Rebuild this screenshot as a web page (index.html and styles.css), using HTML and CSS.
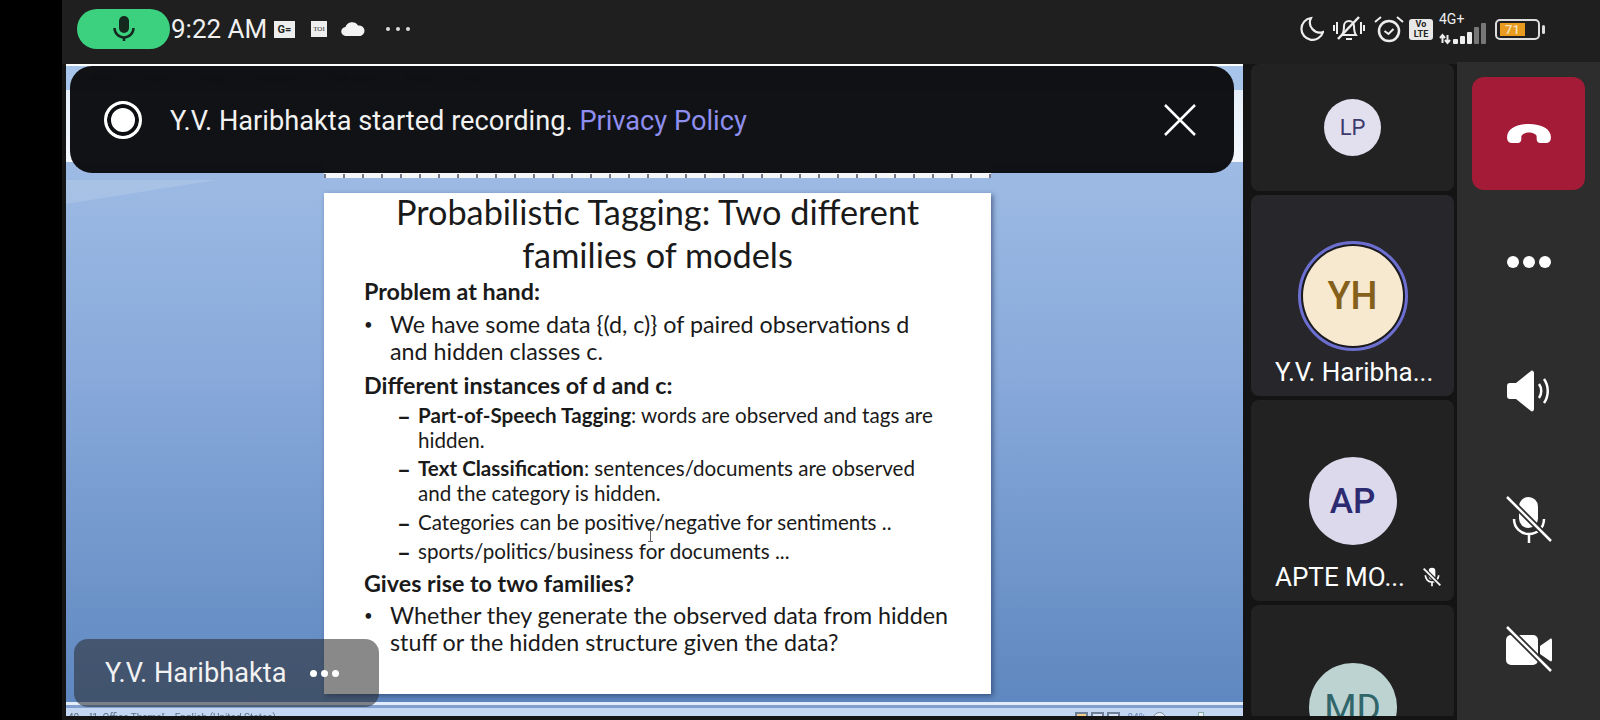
FILE: index.html
```html
<!DOCTYPE html>
<html lang="en">

<head>
    <meta charset="UTF-8">
    <title>Meeting</title>
    <link rel="stylesheet" href="styles.css">
</head>

<body>
    <div class="gutter"></div>
    <div class="app">
        <div class="topbar">
            <div class="status-left">
                <div class="mic-pill">
                    <svg width="24" height="26" viewBox="0 0 24 26"><rect x="7" y="0" width="10" height="17" rx="5" fill="#14281e"/><path d="M2.500 12a9.500 9.500 0 0 0 19 0" fill="none" stroke="#14281e" stroke-width="2.500"/><path d="M12 21v4" stroke="#14281e" stroke-width="2.500"/></svg>
                </div>
                <span class="clock">9:22 AM</span>
                <span class="news-ge">G=</span>
                <span class="news-toi">TOI</span>
                <svg class="cloud" width="24" height="14" viewBox="0 0 24 14"><path d="M5 14a4.500 4.500 0 0 1-.5-9A7 7 0 0 1 17 3.500 5.400 5.400 0 0 1 19.500 14z" fill="#f2f2f2"/></svg>
                <svg class="more" width="26" height="6" viewBox="0 0 26 6"><circle cx="3" cy="3" r="2" fill="#ddd"/><circle cx="13" cy="3" r="2" fill="#ddd"/><circle cx="23" cy="3" r="2" fill="#ddd"/></svg>
            </div>
            <div class="status-right">
                <svg width="25" height="26" viewBox="0 0 25 26"><path d="M12 2a11 11 0 1 0 12 14A10 10 0 0 1 12 2z" fill="none" stroke="#eee" stroke-width="2.200"/></svg>
                <svg width="32" height="30" viewBox="0 0 32 30"><path d="M9 21c2-3 2-6 2-9a5 5 0 0 1 10 0c0 4 0 6 2 9z" fill="none" stroke="#eee" stroke-width="2"/><path d="M13 25h6M1 11v6M4 8v12M31 11v6M28 8v12" stroke="#eee" stroke-width="2"/><path d="M5 25 26 3" stroke="#eee" stroke-width="2.500"/></svg>
                <svg class="alarm" width="30" height="28" viewBox="0 0 30 28"><circle cx="15" cy="16" r="10" fill="none" stroke="#eee" stroke-width="2.500"/><path d="M10.500 16l4 3 5-5M1 7l6-5M29 7l-6-5" fill="none" stroke="#eee" stroke-width="2"/></svg>
                <div class="volte">Vo<br>LTE</div>
                <div class="signal">
                    <span class="signal-label">4G+</span>
                    <svg width="47" height="22" viewBox="0 0 47 22"><path d="M3.500 12v8M1 15l2.500-3 2.500 3M8.500 20v-8M6 17l2.500 3 2.500-3" fill="none" stroke="#eee" stroke-width="2"/><rect x="14" y="16" width="5" height="5" rx="1" fill="#eee"/><rect x="21" y="13" width="5" height="8" rx="1" fill="#eee"/><rect x="28" y="9" width="5" height="12" rx="1" fill="#eee"/><rect x="35" y="4" width="5" height="17" rx="1" fill="#777"/><rect x="42" y="0" width="5" height="21" rx="1" fill="#777"/></svg>
                </div>
                <div class="battery">
                    <div class="battery-body">
                        <div class="battery-fill" style="width: 71%">71</div>
                    </div>
                    <div class="battery-tip"></div>
                </div>
            </div>
        </div>

        <div class="main">
            <div class="stage">
                <div class="ribbon">
                    <span>Home</span><span>Insert</span><span>Design</span><span>Animations</span><span>Slide Show</span><span>Review</span><span>View</span>
                </div>
                <div class="workspace">
                    <div class="swoosh"></div>
                    <div class="ruler"></div>
                    <div class="slide">
                        <h1>Probabilistic Tagging: Two different<br>families of models</h1>
                        <h3 class="head-first">Problem at hand:</h3>
                        <ul class="bullets first-bullets">
                            <li>We have some data {(d, c)} of paired observations d<br>and hidden classes c.</li>
                        </ul>
                        <h3 class="head-second">Different instances of d and c:</h3>
                        <ul class="dashes">
                            <li><b>Part-of-Speech Tagging</b>: words are observed and tags are<br>hidden.</li>
                            <li><b>Text Classification</b>: sentences/documents are observed<br>and the category is hidden.</li>
                            <li>Categories can be positive/negative for sentiments ..</li>
                            <li>sports/politics/business for documents ...</li>
                        </ul>
                        <h3 class="head-third">Gives rise to two families?</h3>
                        <ul class="bullets last-bullets">
                            <li>Whether they generate the observed data from hidden<br>stuff or the hidden structure given the data?</li>
                        </ul>
                        <svg class="cursor" width="7" height="12" viewBox="0 0 7 12"><path d="M1 .5h5M1 11.500h5M3.500 .5v11" fill="none" stroke="#666" stroke-width="1"/></svg>
                    </div>
                </div>
                <div class="statusline">
                    <div class="statusline-text">40 &nbsp; &nbsp;"1_Office Theme" &nbsp; &nbsp;English (United States)</div>
                    <div class="views">
                        <span class="view-btn active"></span><span class="view-btn"></span><span class="view-btn"></span>
                        <span class="zoom-pct">84%</span>
                        <span class="zoom-minus"></span>
                        <span class="zoom-thumb"></span>
                    </div>
                </div>
            </div>

            <div class="tiles">
                <div class="tile tile-lp">
                    <div class="avatar avatar-lp">LP</div>
                </div>
                <div class="tile tile-yh">
                    <div class="speaking">
                        <div class="avatar avatar-yh">YH</div>
                    </div>
                    <div class="tile-name">Y.V. Haribha...</div>
                </div>
                <div class="tile tile-ap">
                    <div class="avatar avatar-ap">AP</div>
                    <div class="tile-name">APTE MO...
                        <svg class="muted-small" width="20" height="20" viewBox="0 0 24 24"><rect x="8" y="1" width="8" height="14" rx="4" fill="#fff"/><path d="M4 10a8 8 0 0 0 16 0M12 18v5" fill="none" stroke="#fff" stroke-width="2"/><path d="M2 2l20 20" stroke="#2a2a2a" stroke-width="5"/><path d="M2 2l20 20" stroke="#fff" stroke-width="2"/></svg>
                    </div>
                </div>
                <div class="tile tile-md">
                    <div class="avatar avatar-md">MD</div>
                </div>
            </div>

            <div class="controls">
                <div class="end-call">
                    <svg width="46" height="21" viewBox="0 0 48 22"><path d="M1 15C1 6 11 1 24 1s23 5 23 14c0 4-2 6-5 6h-6c-3 0-4-2-4-5v-2c0-2-4-4-8-4s-8 2-8 4v2c0 3-1 5-4 5H6c-3 0-5-2-5-6z" fill="#fff"/></svg>
                </div>
                <div class="control-btn dots-btn">
                    <i></i><i></i><i></i>
                </div>
                <div class="control-btn">
                    <svg width="46" height="42" viewBox="0 0 46 42"><path d="M1 16c0-2 1-3 3-3h6L25 1c1-1 3 0 3 2v36c0 2-2 3-3 2L10 29H4c-2 0-3-1-3-3z" fill="#fff"/><path d="M33 14c3 4 3 10 0 14M38 9c5 7 5 17 0 24" fill="none" stroke="#fff" stroke-width="2.500"/></svg>
                </div>
                <div class="control-btn">
                    <svg width="46" height="48" viewBox="0 0 46 48"><rect x="13" y="1" width="19" height="31" rx="9.500" fill="#fff"/><path d="M8 23c0 9 7 15 15 15s15-6 15-15M23 38v9" fill="none" stroke="#fff" stroke-width="2.500"/><path d="M1 1l44 44" stroke="#2d2d2d" stroke-width="6"/><path d="M1 1l44 44" stroke="#fff" stroke-width="2.500"/></svg>
                </div>
                <div class="control-btn">
                    <svg width="46" height="46" viewBox="0 0 46 46"><rect x="0" y="9" width="32" height="30" rx="5" fill="#fff"/><path d="M34 20l10-7c1-1 2 0 2 1v20c0 1-1 2-2 1l-10-7z" fill="#fff"/><path d="M1 1l44 44" stroke="#2d2d2d" stroke-width="6"/><path d="M1 1l44 44" stroke="#fff" stroke-width="2.500"/></svg>
                </div>
            </div>

            <div class="toast">
                <div class="rec-icon"></div>
                <div class="toast-text">Y.V. Haribhakta started recording. <span class="toast-link">Privacy Policy</span></div>
                <svg class="toast-close" width="32" height="32" viewBox="0 0 32 32"><path d="M1 1l30 30M31 1L1 31" stroke="#fff" stroke-width="2.500"/></svg>
            </div>

            <div class="name-label">
                <span>Y.V. Haribhakta</span>
                <div class="label-dots"><i></i><i></i><i></i></div>
            </div>
        </div>
    </div>
</body>

</html>
```

FILE: styles.css
```css
* {
    box-sizing: border-box;
}

body {
    margin: 0;
    width: 1600px;
    height: 720px;
    overflow: hidden;
    display: flex;
    background: #000;
    font-family: Roboto, sans-serif;
    color: #fff;
}

.gutter {
    width: 62px;
    flex-shrink: 0;
    background: #000;
}

.app {
    flex: 1;
    display: flex;
    flex-direction: column;
    background: #1c1c1c;
}

/* status bar */
.topbar {
    height: 64px;
    flex-shrink: 0;
    background: #1f1f1f;
    display: flex;
    justify-content: space-between;
    align-items: center;
    padding: 0 55px 6px 15px;
}

.status-left {
    display: flex;
    align-items: center;
}

.status-right {
    display: flex;
    align-items: center;
}

.status-right > svg {
    margin-right: 9px;
}

.status-right > .alarm {
    margin-right: 5px;
}

.mic-pill {
    width: 93px;
    height: 40px;
    border-radius: 20px;
    background: #3bd17f;
    display: flex;
    justify-content: center;
    align-items: center;
}

.clock {
    margin-left: 1px;
    font-size: 26px;
    color: #f0f0f0;
    width: 103px;
}

.news-ge {
    width: 21px;
    height: 17px;
    background: #eee;
    color: #222;
    font-size: 11px;
    font-weight: 700;
    line-height: 17px;
    text-align: center;
}

.news-toi {
    margin-left: 16px;
    width: 16px;
    height: 16px;
    background: #eee;
    color: #333;
    font-family: "Liberation Serif", serif;
    font-size: 7px;
    line-height: 16px;
    text-align: center;
}

.cloud {
    margin-left: 14px;
}

.more {
    margin-left: 20px;
}

.volte {
    width: 24px;
    height: 21px;
    border-radius: 3px;
    background: #e8e8e8;
    color: #222;
    font-size: 9px;
    font-weight: 700;
    line-height: 10px;
    text-align: center;
    margin-right: 6px;
}

.signal {
    width: 47px;
    display: flex;
    flex-direction: column;
    margin-right: 9px;
    margin-top: -2px;
}

.signal svg {
    margin-top: -3px;
}

.signal-label {
    font-size: 14px;
    line-height: 14px;
    color: #eee;
}

.battery {
    display: flex;
    align-items: center;
    gap: 2px;
}

.battery-body {
    width: 45px;
    height: 21px;
    border: 2px solid #ddd;
    border-radius: 5px;
    padding: 2px 3px;
}

.battery-fill {
    height: 100%;
    background: #e89b1e;
    color: #f3e3bd;
    font-size: 13px;
    font-weight: 500;
    line-height: 13px;
    text-align: center;
}

.battery-tip {
    width: 3px;
    height: 9px;
    border-radius: 2px;
    background: #ddd;
}

/* main row */
.main {
    flex: 1;
    display: flex;
    position: relative;
    min-height: 0;
    background: #141414;
}

.stage {
    width: 1177px;
    margin-left: 4px;
    margin-bottom: 4px;
    flex-shrink: 0;
    display: flex;
    flex-direction: column;
    overflow: hidden;
    background: #5f88c0;
}

.ribbon {
    height: 98px;
    flex-shrink: 0;
    border-top: 2px solid #fff;
    background: linear-gradient(#a7c5ea 0, #a7c5ea 24px, #e6eff9 24px, #f4f8fd 100%);
    display: flex;
    gap: 30px;
    padding: 8px 0 0 24px;
    font-size: 9px;
    color: #345;
}

.workspace {
    flex: 1;
    position: relative;
    background: linear-gradient(#9dbbe4 0, #88a9da 40%, #5f88c0 100%);
    min-height: 0;
}

.swoosh {
    position: absolute;
    left: 0;
    top: 18px;
    width: 150px;
    height: 24px;
    background: rgba(255, 255, 255, 0.13);
    clip-path: polygon(0 0, 100% 0, 0 100%);
}

.ruler {
    width: 667px;
    height: 16px;
    margin-left: 258px;
    background: repeating-linear-gradient(90deg, #778 0, #778 2px, transparent 2px, transparent 19px) bottom / 100% 4px no-repeat, #f4f6f8;
}

.slide {
    display: flow-root;
    position: relative;
    width: 667px;
    height: 501px;
    margin: 15px 0 0 258px;
    background: #fff;
    box-shadow: 2px 2px 5px rgba(30, 50, 90, 0.6);
    padding-left: 40px;
    color: #1a1a1a;
    font-family: Lato, sans-serif;
}

.slide h1 {
    margin: -3px 0 0 -40px;
    font-size: 34.300px;
    font-weight: 400;
    line-height: 43px;
    text-align: center;
}

.slide h3 {
    margin: 0;
    font-size: 23.300px;
    font-weight: 700;
    line-height: 26px;
}

.slide .head-first {
    margin-top: 2px;
}

.slide .head-second {
    margin-top: 7px;
}

.slide .head-third {
    margin-top: 6px;
}

.bullets {
    list-style: none;
    margin: 7px 0 0;
    padding: 0 0 0 26px;
    font-size: 23.300px;
    line-height: 27px;
    position: relative;
}

.last-bullets {
    margin-top: 6px;
}

.bullets li::before {
    content: "\2022";
    position: absolute;
    left: 0;
    font-size: 15px;
}

.dashes {
    list-style: none;
    margin: 5px 0 0;
    padding: 0 0 0 54px;
    font-size: 20.600px;
    line-height: 25px;
}

.dashes li {
    position: relative;
    margin-bottom: 3px;
}

.dashes li:nth-child(2),
.dashes li:nth-child(3) {
    margin-bottom: 4px;
}

.dashes li::before {
    content: "\2013";
    position: absolute;
    left: -21px;
    font-size: 24px;
    font-weight: 700;
}

.cursor {
    position: absolute;
    left: 323px;
    top: 337px;
}

.statusline {
    height: 14px;
    flex-shrink: 0;
    border-top: 3px solid #e2ecfa;
    background: linear-gradient(#7f9fcf 0, #7f9fcf 3px, #c3d7f2 3px);
    display: flex;
    justify-content: space-between;
    padding: 7px 39px 0 2px;
    font-size: 10px;
    color: #456;
    overflow: hidden;
}

.statusline-text {
    opacity: 0.8;
    filter: blur(0.4px);
}

.views {
    display: flex;
    align-items: flex-start;
    gap: 3px;
    filter: blur(0.4px);
}

.view-btn {
    width: 13px;
    height: 12px;
    border: 2px solid #6d7f99;
    background: #d9e5f5;
}

.view-btn.active {
    background: #f7cf8d;
}

.zoom-pct {
    margin-left: 4px;
    color: #6b88b8;
}

.zoom-minus {
    width: 13px;
    height: 13px;
    margin-left: 4px;
    border: 1px solid #789;
    border-radius: 50%;
    background: #e6eef9;
}

.zoom-thumb {
    width: 6px;
    height: 10px;
    margin-left: 29px;
    background: #eef3fa;
    border: 1px solid #8aa;
}

/* participants */
.tiles {
    width: 203px;
    margin-left: 8px;
    margin-bottom: 4px;
    flex-shrink: 0;
    display: flex;
    flex-direction: column;
    gap: 4px;
    overflow: hidden;
}

.tile {
    flex-shrink: 0;
    background: #222;
    border-radius: 8px;
    display: flex;
    flex-direction: column;
    align-items: center;
    overflow: hidden;
}

.tile-lp {
    height: 127px;
    justify-content: center;
}

.tile-yh {
    height: 201px;
    background: #26262b;
    padding-top: 46px;
}

.tile-ap {
    height: 201px;
    padding-top: 57px;
}

.tile-md {
    height: 115px;
    padding-top: 58px;
}

.avatar {
    border-radius: 50%;
    display: flex;
    justify-content: center;
    align-items: center;
    flex-shrink: 0;
}

.avatar-lp {
    width: 57px;
    height: 57px;
    background: #e2dfef;
    color: #3c3a6b;
    font-size: 22px;
}

.speaking {
    width: 110px;
    height: 110px;
    border: 3px solid #6c6fd0;
    border-radius: 50%;
    padding: 2px;
    background: #1a1a1e;
}

.avatar-yh {
    width: 100%;
    height: 100%;
    background: #f7e9cf;
    color: #85601b;
    font-size: 38px;
    font-weight: 500;
}

.avatar-ap {
    width: 88px;
    height: 88px;
    background: #dcd9ec;
    color: #2c2a70;
    font-size: 35px;
    font-weight: 500;
}

.avatar-md {
    width: 88px;
    height: 88px;
    background: #bcd3d2;
    color: #30666a;
    font-size: 37px;
}

.tile-name {
    width: 100%;
    padding-left: 24px;
    font-size: 26px;
    line-height: 30px;
    white-space: nowrap;
    display: flex;
    align-items: center;
}

.tile-yh .tile-name {
    margin-top: 6px;
}

.tile-ap .tile-name {
    margin-top: 17px;
}

.muted-small {
    margin-left: 17px;
}

/* call controls */
.controls {
    position: absolute;
    right: 0;
    top: -2px;
    bottom: 0;
    width: 143px;
    background: #2d2d2d;
    display: flex;
    flex-direction: column;
    align-items: center;
    padding-top: 15px;
}

.end-call {
    width: 113px;
    height: 113px;
    border-radius: 12px;
    background: #a31b37;
    display: flex;
    justify-content: center;
    align-items: center;
}

.control-btn {
    height: 129px;
    flex-shrink: 0;
    display: flex;
    justify-content: center;
    align-items: center;
    gap: 4px;
}

.dots-btn {
    margin-top: 7px;
}

.dots-btn i {
    width: 12px;
    height: 12px;
    border-radius: 50%;
    background: #fff;
}

/* overlays */
.toast {
    position: absolute;
    left: 8px;
    top: 2px;
    width: 1164px;
    height: 107px;
    border-radius: 22px;
    background: rgba(12, 13, 16, 0.98);
    display: flex;
    align-items: center;
    padding: 0 38px 0 34px;
}

.rec-icon {
    width: 38px;
    height: 38px;
    border-radius: 50%;
    border: 3px solid #fff;
    box-shadow: inset 0 0 0 4px #0d0e11;
    background: #fff;
    flex-shrink: 0;
}

.toast-text {
    margin-left: 28px;
    margin-top: 2px;
    font-size: 27.200px;
    color: #f2f2f2;
    flex: 1;
}

.toast-link {
    color: #8f8ff0;
}

.name-label {
    position: absolute;
    left: 12px;
    top: 575px;
    width: 305px;
    height: 68px;
    border-radius: 14px;
    background: rgba(40, 40, 42, 0.55);
    display: flex;
    align-items: center;
    padding-left: 31px;
    font-size: 27.200px;
    color: #f2f2f2;
}

.label-dots {
    display: flex;
    gap: 4px;
    margin-left: 24px;
}

.label-dots i {
    width: 7px;
    height: 7px;
    border-radius: 50%;
    background: #fff;
}
```
